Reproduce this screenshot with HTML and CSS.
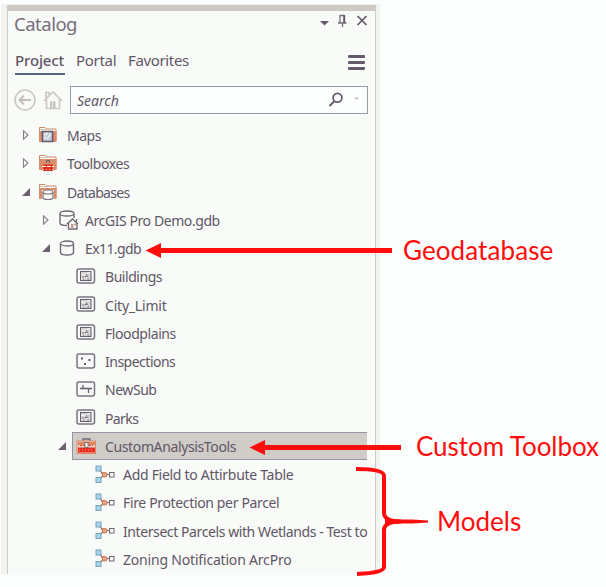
FILE: index.html
```html
<!DOCTYPE html>
<html lang="en">
<head>
<meta charset="utf-8">
<title>Catalog</title>
<link rel="stylesheet" href="styles.css">
</head>
<body>
<svg class="defs" width="0" height="0" aria-hidden="true">
  <defs>
    <symbol id="closed" viewBox="0 0 8 10"><path d="M1.500 .8v8.400L6 5z" fill="#fafbf9" stroke="#858087" stroke-width="1.100"/></symbol>
    <symbol id="open" viewBox="0 0 8 8"><path d="M8 0v8H0z" fill="#6b5f70"/></symbol>
    <symbol id="folder" viewBox="0 0 20 18"><path d="M1.500 15.500V1.500H7l1.500 1.500H18v12.500z" fill="#fafaf7" stroke="#d58a67"/><path d="M1 5h17.500v10.500H1z" fill="#d98d6b"/><path d="M2 3.500h15" stroke="#d9c3b2"/></symbol>
    <symbol id="polygon" viewBox="0 0 20 17"><rect x="1" y="1" width="17.500" height="14" rx="2" fill="#f7f8f7" stroke="#777681" stroke-width="1.500"/><rect x="4.500" y="3.500" width="10.500" height="9" fill="#d5d3d1" stroke="#655d6b"/><path d="M5 6l4 1 5-3M9 7l3 5M5 11l3-2" fill="none" stroke="#fff"/><path d="M6 9h2M11 6l-2 3 3-1M7 11h1M12 10v2" stroke="#77717a" fill="none"/></symbol>
    <symbol id="points" viewBox="0 0 20 17"><rect x="1" y="1" width="17.500" height="14" rx="2" fill="#f7f8f7" stroke="#777681" stroke-width="1.500"/><path d="M5 4.500h2v2H5zM12.500 6h2v2h-2zM8 10h2v2H8z" fill="#675d6b"/></symbol>
    <symbol id="line" viewBox="0 0 20 17"><rect x="1" y="1" width="17.500" height="14" rx="2" fill="#f7f8f7" stroke="#777681" stroke-width="1.500"/><path d="M4 7.500h12M7 4v3.500M12.500 7.500V12" stroke="#675d6b" stroke-width="1.300"/></symbol>
    <symbol id="model" viewBox="0 0 20 19"><path d="M5 5l3 5-3 4M12 9.500h2" fill="none" stroke="#716b77" stroke-width="1.200"/><rect x="1" y="1" width="5" height="5" fill="#a4d5f2" stroke="#7c9fb3"/><rect x="1" y="12.500" width="5" height="5" fill="#a4d5f2" stroke="#7c9fb3"/><path d="M7.500 7.500h2.300q2.400 0 2.400 2.200t-2.400 2.200H7.500z" fill="#e7a37f" stroke="#c97c58"/><rect x="14.500" y="7.500" width="4.500" height="4.500" fill="#fafbf9" stroke="#6e6673"/></symbol>
    <symbol id="db" viewBox="0 0 16 16"><path d="M1.500 4v8.500q0 2.500 6.500 2.500t6.500-2.500V4" fill="#f8f9f7" stroke="#706975" stroke-width="1.400"/><ellipse cx="8" cy="3.500" rx="6.500" ry="2.500" fill="#fafbf9" stroke="#706975" stroke-width="1.300"/></symbol>
  </defs>
</svg>

<div class="frame">
  <section class="panel">
    <header class="title-row">
      <h1>Catalog</h1>
      <svg class="controls" width="52" height="16" viewBox="0 0 52 16"><path d="M1 7h9L5.500 11.500z" fill="#65596b"/><path d="M21 1v8M21 1.500h4.500M19 9h8.500M23.500 9v4" fill="none" stroke="#756e7a" stroke-width="1.300"/><path d="M25.200 1v8" stroke="#65596b" stroke-width="2"/><path d="M38.500 2l9 9M47.500 2l-9 9" stroke="#65596b" stroke-width="1.700"/></svg>
    </header>
    <nav class="tabs">
      <span class="tab tab-active">Project</span><span class="tab tab-portal">Portal</span><span class="tab tab-fav">Favorites</span>
      <span class="menu"><i></i><i></i><i></i></span>
    </nav>
    <div class="search-row">
      <svg width="22" height="22" viewBox="0 0 22 22"><circle cx="11" cy="11" r="10" fill="none" stroke="#cbc6c1" stroke-width="1.500"/><path d="M17 11H6M10 6.500L5.500 11l4.500 4.500" fill="none" stroke="#c3beb9" stroke-width="1.800"/></svg>
      <svg class="home" width="20" height="22" viewBox="0 0 20 22"><path d="M1 12l9-9 9 9M3.500 10.500v9h13v-9M3 9V3.500h3V6" fill="none" stroke="#cbc6c1" stroke-width="1.600"/><path d="M7 12.500h5.500v7H7z" fill="#c5c0bb"/><path d="M9.500 13v6" stroke="#f1f1ed"/></svg>
      <div class="search"><span>Search</span>
        <svg width="32" height="16" viewBox="0 0 32 16"><circle cx="10.500" cy="5.800" r="4.400" fill="none" stroke="#65596b" stroke-width="1.700"/><path d="M7.500 9l-5 5" stroke="#65596b" stroke-width="2"/><path d="M27 5.500h5L29.500 8z" fill="#c3bfbc"/></svg>
      </div>
    </div>
    <div class="tree">
      <div class="row l0"><svg class="tw"><use href="#closed"/></svg><svg class="icon" viewBox="0 0 20 18"><use href="#folder"/><rect x="4.500" y="5.500" width="10" height="10" fill="#c4d1d7" stroke="#62596a" stroke-width="1.500"/><path d="M6 9l4-2M9 13l4-5M6 13l2-2" stroke="#fff"/></svg><span class="maps">Maps</span></div>
      <div class="row l0"><svg class="tw"><use href="#closed"/></svg><svg class="icon" viewBox="0 0 20 18"><use href="#folder"/><path d="M8.500 9V6.500h3V9" fill="none" stroke="#69606b"/><path d="M5 10.500h10V17H5z" fill="#e32b1d"/><path d="M4 12.500h12" stroke="#fff" stroke-dasharray="4 1"/><path d="M5 15.500h10" stroke="#ffc9bb" stroke-dasharray="1 2"/></svg><span class="toolboxes">Toolboxes</span></div>
      <div class="row l0"><svg class="tw"><use href="#open"/></svg><svg class="icon" viewBox="0 0 20 18"><use href="#folder"/><path d="M4 7h12v10H4z" fill="#fafbf9"/><path d="M5 9v5.500q0 2 5 2t5-2V9" fill="#fafbf9" stroke="#79737d" stroke-width="1.200"/><ellipse cx="10" cy="9" rx="5" ry="2" fill="#fafbf9" stroke="#79737d" stroke-width="1.200"/></svg><span class="databases">Databases</span></div>
      <div class="row l1"><svg class="tw"><use href="#closed"/></svg><svg class="icon" viewBox="0 0 20 20"><path d="M1 4v9q0 2.500 7 2.500M15 4v4" fill="none" stroke="#706975" stroke-width="1.400"/><ellipse cx="8" cy="3.500" rx="7" ry="2.500" fill="#fafbf9" stroke="#706975" stroke-width="1.300"/><path d="M8 14l5.500-5 5.500 5M9.500 13v6h8.500v-6M17.500 12V9" fill="#fafbf9" stroke="#6c6571" stroke-width="1.300"/><path d="M12 14h2.500v5H12z" fill="#ba9c94"/><path d="M15.500 13.500h1.500v2h-1.500z" fill="#d98d6b"/></svg><span class="demo">ArcGIS Pro Demo.gdb</span></div>
      <div class="row l1"><svg class="tw"><use href="#open"/></svg><svg class="icon db-icon"><use href="#db"/></svg><span class="ex">Ex11.gdb</span></div>
      <div class="row l2"><svg class="icon feature"><use href="#polygon"/></svg><span class="buildings">Buildings</span></div>
      <div class="row l2"><svg class="icon feature"><use href="#polygon"/></svg><span class="city">City_Limit</span></div>
      <div class="row l2"><svg class="icon feature"><use href="#polygon"/></svg><span class="flood">Floodplains</span></div>
      <div class="row l2"><svg class="icon feature"><use href="#points"/></svg><span class="inspections">Inspections</span></div>
      <div class="row l2"><svg class="icon feature"><use href="#line"/></svg><span class="newsub">NewSub</span></div>
      <div class="row l2"><svg class="icon feature"><use href="#polygon"/></svg><span class="parks">Parks</span></div>
      <div class="row toolbox-row"><svg class="tw"><use href="#open"/></svg><div class="selected"><svg class="icon toolbox" viewBox="0 0 20 17"><path d="M7 4V1.500h7V4" fill="none" stroke="#716a76" stroke-width="1.500"/><rect x="1" y="3.500" width="18.500" height="12.500" fill="#e9d6c8" stroke="#db8967"/><path d="M2 4.500h17v3H2z" fill="#df8763"/><path d="M2 10h17v5H2z" fill="#e92a1f"/><path d="M4 8h13" stroke="#e64735" stroke-dasharray="2 1"/><path d="M3 12.500h15" stroke="#ffad9d" stroke-dasharray="1 2"/><rect x="9" y="5" width="3" height="5" fill="#fff" stroke="#7c707b"/></svg><span class="custom">CustomAnalysisTools</span></div></div>
      <div class="row l3"><svg class="icon model"><use href="#model"/></svg><span class="add">Add Field to Attirbute Table</span></div>
      <div class="row l3"><svg class="icon model"><use href="#model"/></svg><span class="fire">Fire Protection per Parcel</span></div>
      <div class="row l3"><svg class="icon model"><use href="#model"/></svg><span class="intersect">Intersect Parcels with Wetlands - Test to</span></div>
      <div class="row l3"><svg class="icon model"><use href="#model"/></svg><span class="zoning">Zoning Notification ArcPro</span></div>
    </div>
  </section>
</div>

<svg class="marks" width="606" height="587" viewBox="0 0 606 587">
  <path d="M392 250.500H158M401 447.500H262" stroke="#ff0d0d" stroke-width="5"/>
  <path d="M145.500 250.500L161 243v15zM249.500 447.500L265 440v15z" fill="#ff0d0d"/>
  <path d="M356 469C374 469 384 471 384 476V513Q384 521 401 521.500Q384 522 384 530V567Q384 573 357 574" fill="none" stroke="#ff0d0d" stroke-width="4"/>
  <path d="M385 518q6 2 16 1.500h11l16 1v2l-16 1h-11q-10 0-16 1.500z" fill="#ff0d0d"/>
</svg>
<div class="note geodatabase">Geodatabase</div>
<div class="note custom-toolbox">Custom Toolbox</div>
<div class="note models">Models</div>
</body>
</html>
```
FILE: styles.css
```css
* { box-sizing: border-box; }
body { margin: 0; padding-top: 4px; width: 606px; height: 587px; overflow: hidden; position: relative; background: #fcfefd; color: #5f5666; font-family: "Noto Sans", "Open Sans", sans-serif; }
.defs { position: absolute; }
.frame { width: 379px; height: 570px; margin-left: 1px; padding: 1px 4px 0 6px; background: #f1f3ee; }
.panel { width: 369px; height: 569px; border: 1px solid #cfcbc5; border-top: 6px solid #cdc9c5; border-bottom: 0; background: #f9fbf8; }
.title-row { height: 36px; display: flex; justify-content: space-between; padding: 0 0 0 6px; }
h1 { margin: 1px 0 0; font-size: 18.5px; line-height: 24px; font-weight: 400; color: #756f7c; letter-spacing: -.5px; }
.controls { margin: 3px 4px 0 0; }
.tabs { height: 31px; display: flex; padding: 0 0 0 7px; font-size: 15px; line-height: 26px; }
.tab { height: 28px; white-space: nowrap; }
.tab-active { width: 50px; border-bottom: 2px solid #576681; font-weight: 500; margin-right: 11px; letter-spacing: -.15px; }
.tab-portal { width: 52px; letter-spacing: -.3px; }
.tab-fav { letter-spacing: -.35px; }
.menu { margin: 8px 10px 0 auto; width: 17px; display: flex; flex-direction: column; gap: 3px; }
.menu i { height: 3px; border-radius: 1px; background: #65596b; }
.search-row { height: 28px; margin-top: 8px; display: flex; padding-left: 6px; align-items: center; }
.home { margin-left: 7px; }
.search { width: 298px; height: 28px; margin-left: 7px; border: 1px solid #989ba5; background: #fcfefd; display: flex; align-items: center; justify-content: space-between; padding: 0 8px 0 6px; font-size: 14px; font-style: italic; }
.tree { margin-top: 7px; width: 359px; }
.row { height: 28.250px; display: flex; align-items: center; font-size: 14px; line-height: 20px; white-space: nowrap; }
.row span { position: relative; top: 1px; }
.tw { width: 8px; height: 10px; margin-right: 8px; flex: none; }
.icon { width: 20px; height: 18px; margin-right: 9px; flex: none; }
.l0 { padding-left: 14px; }
.l1 { padding-left: 34px; }
.l1 .tw { margin-right: 9px; }
.l1 .icon { height: 20px; margin-right: 6px; }
.l1 .db-icon { width: 16px; height: 16px; margin-right: 10px; }
.l2 { padding-left: 68px; }
.feature { height: 17px; }
.l3 { padding-left: 87px; }
.model { height: 19px; margin-right: 8px; }
.toolbox-row { padding-left: 50px; }
.toolbox-row .tw { margin-right: 6px; }
.selected { flex: 1; height: 28px; display: flex; align-items: center; border: 1px solid #9598a2; border-right: 0; background: #d0ccc8; padding-left: 3px; }
.maps { letter-spacing: -.5px; }
.toolboxes { letter-spacing: -.4px; }
.databases { letter-spacing: -.7px; }
.demo { letter-spacing: -.42px; }
.ex { letter-spacing: -.6px; }
.buildings { letter-spacing: -.45px; }
.city { letter-spacing: -.2px; }
.flood { letter-spacing: -.42px; }
.inspections { letter-spacing: -.5px; }
.newsub { letter-spacing: -.45px; }
.parks { letter-spacing: -.6px; }
.custom { letter-spacing: -.37px; }
.add { letter-spacing: -.29px; }
.fire { letter-spacing: -.35px; }
.intersect { letter-spacing: -.41px; }
.zoning { letter-spacing: -.19px; }
.marks { position: absolute; left: 0; top: 0; }
.note { position: absolute; color: #ff0d0d; font: 26px/32px Lato, sans-serif; white-space: nowrap; }
.geodatabase { left: 403px; top: 234px; letter-spacing: .1px; }
.custom-toolbox { left: 416px; top: 430px; letter-spacing: -.05px; }
.models { left: 437px; top: 505px; }
```
